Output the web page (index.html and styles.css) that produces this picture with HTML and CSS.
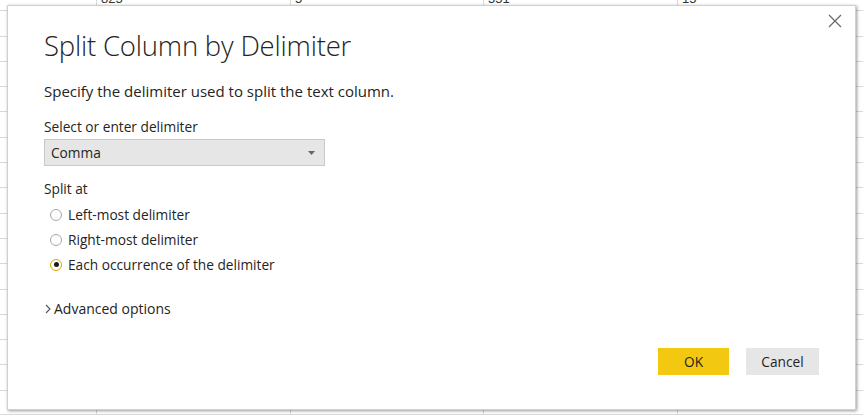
FILE: index.html
```html
<!DOCTYPE html>
<html>
<head>
<meta charset="utf-8">
<link rel="stylesheet" href="styles.css">
</head>
<body>
<div class="sheet">
  <div class="row"><div class="cell c0"></div><div class="cell c1">825</div><div class="cell c2">5</div><div class="cell c3">551</div><div class="cell c4">15</div><div class="cell c5"></div></div>
  <div class="row"><div class="cell c0"></div><div class="cell c1"></div><div class="cell c2"></div><div class="cell c3"></div><div class="cell c4"></div><div class="cell c5"></div></div>
  <div class="row"><div class="cell c0"></div><div class="cell c1"></div><div class="cell c2"></div><div class="cell c3"></div><div class="cell c4"></div><div class="cell c5"></div></div>
  <div class="row"><div class="cell c0"></div><div class="cell c1"></div><div class="cell c2"></div><div class="cell c3"></div><div class="cell c4"></div><div class="cell c5"></div></div>
  <div class="row"><div class="cell c0"></div><div class="cell c1"></div><div class="cell c2"></div><div class="cell c3"></div><div class="cell c4"></div><div class="cell c5"></div></div>
  <div class="row"><div class="cell c0"></div><div class="cell c1"></div><div class="cell c2"></div><div class="cell c3"></div><div class="cell c4"></div><div class="cell c5"></div></div>
  <div class="row"><div class="cell c0"></div><div class="cell c1"></div><div class="cell c2"></div><div class="cell c3"></div><div class="cell c4"></div><div class="cell c5"></div></div>
  <div class="row"><div class="cell c0"></div><div class="cell c1"></div><div class="cell c2"></div><div class="cell c3"></div><div class="cell c4"></div><div class="cell c5"></div></div>
  <div class="row"><div class="cell c0"></div><div class="cell c1"></div><div class="cell c2"></div><div class="cell c3"></div><div class="cell c4"></div><div class="cell c5"></div></div>
  <div class="row"><div class="cell c0"></div><div class="cell c1"></div><div class="cell c2"></div><div class="cell c3"></div><div class="cell c4"></div><div class="cell c5"></div></div>
  <div class="row"><div class="cell c0"></div><div class="cell c1"></div><div class="cell c2"></div><div class="cell c3"></div><div class="cell c4"></div><div class="cell c5"></div></div>
  <div class="row"><div class="cell c0"></div><div class="cell c1"></div><div class="cell c2"></div><div class="cell c3"></div><div class="cell c4"></div><div class="cell c5"></div></div>
  <div class="row"><div class="cell c0"></div><div class="cell c1"></div><div class="cell c2"></div><div class="cell c3"></div><div class="cell c4"></div><div class="cell c5"></div></div>
  <div class="row"><div class="cell c0"></div><div class="cell c1"></div><div class="cell c2"></div><div class="cell c3"></div><div class="cell c4"></div><div class="cell c5"></div></div>
  <div class="row"><div class="cell c0"></div><div class="cell c1"></div><div class="cell c2"></div><div class="cell c3"></div><div class="cell c4"></div><div class="cell c5"></div></div>
  <div class="row"><div class="cell c0"></div><div class="cell c1"></div><div class="cell c2"></div><div class="cell c3"></div><div class="cell c4"></div><div class="cell c5"></div></div>
  <div class="row last"><div class="cell c0"></div><div class="cell c1"></div><div class="cell c2"></div><div class="cell c3"></div><div class="cell c4"></div><div class="cell c5"></div></div>
</div>

<div class="dialog">
  <button class="close" aria-label="Close">
    <svg width="14" height="14" viewBox="0 0 14 14"><path d="M1 1 L13 13 M13 1 L1 13" stroke="#6b6b6b" stroke-width="1.3" fill="none"/></svg>
  </button>
  <h1 class="title">Split Column by Delimiter</h1>
  <p class="subtitle">Specify the delimiter used to split the text column.</p>
  <div class="label">Select or enter delimiter</div>
  <div class="select">
    <span>Comma</span>
    <svg class="caret" width="7" height="4" viewBox="0 0 7 4"><path d="M0 0 L7 0 L3.5 4 Z" fill="#666"/></svg>
  </div>
  <div class="label split-label">Split at</div>
  <div class="radios">
    <div class="radio"><span class="dot"></span>Left-most delimiter</div>
    <div class="radio"><span class="dot"></span>Right-most delimiter</div>
    <div class="radio checked"><span class="dot"></span>Each occurrence of the delimiter</div>
  </div>
  <div class="advanced">
    <svg class="chev" width="6" height="10" viewBox="0 0 6 10"><path d="M1 1 L5 5 L1 9" stroke="#555" stroke-width="1.1" fill="none"/></svg>
    <span>Advanced options</span>
  </div>
  <div class="buttons">
    <button class="btn ok">OK</button>
    <button class="btn cancel">Cancel</button>
  </div>
</div>
</body>
</html>
```

FILE: styles.css
```css
html, body {
  margin: 0;
  padding: 0;
}
body {
  width: 863px;
  height: 417px;
  overflow: hidden;
  background: #fff;
  font-family: "Open Sans", "Noto Sans", sans-serif;
  color: #252423;
  position: relative;
}

.sheet {
  margin-top: -14px;
}
.row {
  display: flex;
  height: 25.3px;
  box-sizing: border-box;
  border-bottom: 1px solid #d9d9d9;
  overflow: hidden;
}
.row.last {
  height: 24px;
}
.cell {
  flex-shrink: 0;
  box-sizing: border-box;
  border-right: 1px solid #d9d9d9;
  font-size: 13px;
  line-height: 25px;
  padding-left: 4px;
  color: #333;
  font-family: "Liberation Sans", sans-serif;
}
.c0 { width: 97px; }
.c1 { width: 194px; }
.c2 { width: 193px; }
.c3 { width: 194px; }
.c4 { width: 194px; }
.c5 { flex: 1 1 auto; width: auto; border-right: none; }

.dialog {
  position: absolute;
  left: 7px;
  top: 5px;
  width: 849px;
  height: 405px;
  box-sizing: border-box;
  background: #fff;
  border: 1px solid #d0d0d0;
  box-shadow: 1px 1px 3px rgba(0,0,0,0.4);
  padding: 0 36px 0 36px;
  display: flex;
  flex-direction: column;
}

.close {
  position: absolute;
  right: 13px;
  top: 8px;
  width: 14px;
  height: 14px;
  padding: 0;
  border: none;
  background: none;
  display: flex;
}

.title {
  margin: 22px 0 0 0;
  font-weight: 300;
  font-size: 27.5px;
  line-height: 36px;
  color: #252423;
  letter-spacing: -0.2px;
}
.subtitle {
  margin: 17px 0 0 0;
  font-size: 15px;
  line-height: 20px;
}
.label {
  margin-top: 16px;
  font-size: 13.7px;
  line-height: 20px;
}
.select {
  margin-top: 2px;
  width: 281px;
  height: 27px;
  box-sizing: border-box;
  background: #e6e6e6;
  border: 1px solid #c8c8c8;
  display: flex;
  align-items: center;
  justify-content: space-between;
  padding: 0 9px 0 6px;
  font-size: 13.7px;
}
.caret {
  display: block;
}
.split-label {
  margin-top: 13px;
}
.radios {
  margin-top: 3px;
  display: flex;
  flex-direction: column;
  padding-left: 6px;
}
.radio {
  height: 25px;
  display: flex;
  align-items: center;
  font-size: 13.7px;
}
.dot {
  width: 12px;
  height: 12px;
  box-sizing: border-box;
  border: 1px solid #a6a6a6;
  border-radius: 50%;
  margin-right: 6px;
  position: relative;
}
.radio.checked .dot {
  border: 1.5px solid #d9a800;
}
.radio.checked .dot::after {
  content: "";
  position: absolute;
  left: 50%;
  top: 50%;
  width: 5px;
  height: 5px;
  margin: -2.5px 0 0 -2.5px;
  border-radius: 50%;
  background: #1a1a1a;
}
.advanced {
  margin-top: 22px;
  display: flex;
  align-items: center;
  font-size: 14px;
  line-height: 20px;
  padding-left: 1px;
}
.chev {
  margin-right: 3px;
}
.buttons {
  margin-top: 29px;
  display: flex;
  justify-content: flex-end;
  gap: 17px;
}
.btn {
  height: 27px;
  border: none;
  font-family: "Open Sans", "Noto Sans", sans-serif;
  font-size: 13.7px;
  color: #252423;
  padding: 0;
}
.ok {
  width: 71px;
  background: #f2c811;
}
.cancel {
  width: 73px;
  background: #e6e6e6;
}
```
